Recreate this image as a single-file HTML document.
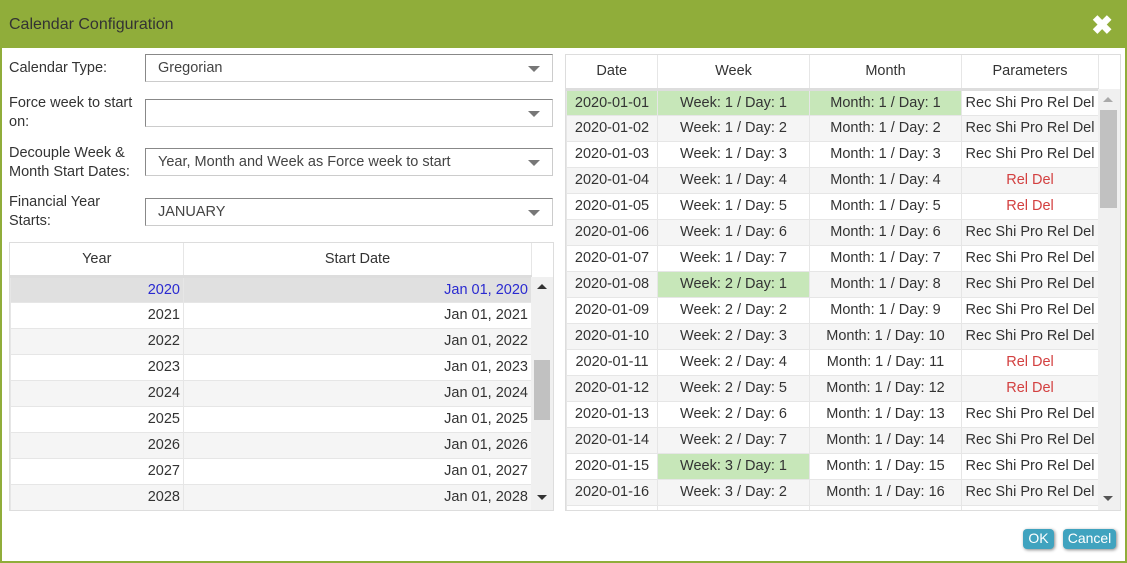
<!DOCTYPE html><html><head><style>
*{box-sizing:border-box;margin:0;padding:0}
body{width:1127px;height:563px;background:#fff;font-family:"Liberation Sans",sans-serif;font-size:14.5px;color:#333;position:relative;overflow:hidden}
.frame{position:absolute;left:0;top:0;width:1127px;height:563px;border:2px solid #90ad3a;border-top:none}
.title{position:absolute;left:0;top:0;width:1127px;height:48px;background:#90ad3a;color:#333;font-size:16px;padding:16px 0 0 9px}
.x{position:absolute;right:14px;top:10px;color:#fff;font-size:26px;font-weight:bold}
.lbl{position:absolute;left:9px;line-height:19px;color:#333}
.sel{position:absolute;left:145px;width:408px;height:28px;border:1px solid #ccc;border-left-color:#888;border-top-color:#888;padding:5px 0 0 12px;color:#444}
.sel:after{content:"";position:absolute;right:12px;top:11px;border-left:6px solid transparent;border-right:6px solid transparent;border-top:6px solid #777}
table{border-collapse:collapse;position:absolute;table-layout:fixed}
td,th{height:26px;border:1px solid #e6e6e6;font-weight:normal;white-space:nowrap;overflow:hidden;padding:0 3px}
th{height:34px;background:#fff}
.L tr:nth-child(even) td{background:#f5f5f5}
.R tr:nth-child(odd) td{background:#f5f5f5}
.g{background:#c7e7b9!important}
.r{color:#d34040}
.sb{position:absolute;background:#f0f0f0}
.btn{position:absolute;top:529px;height:20px;background:#40a3bf;color:#fff;border-radius:4px;font-size:14px;text-align:center;line-height:19px;box-shadow:1px 1px 3px #888}
</style></head><body>
<div class="title">Calendar Configuration<span class="x">✖</span></div>
<div class="frame"></div>
<div class="lbl" style="top:59px">Calendar Type:</div>
<div class="sel" style="top:54px">Gregorian</div>
<div class="lbl" style="top:94px">Force week to start<br>on:</div>
<div class="sel" style="top:99px"></div>
<div class="lbl" style="top:144px">Decouple Week &amp;<br>Month Start Dates:</div>
<div class="sel" style="top:148px">Year, Month and Week as Force week to start</div>
<div class="lbl" style="top:193px">Financial Year<br>Starts:</div>
<div class="sel" style="top:198px">JANUARY</div>

<div style="position:absolute;left:9px;top:242px;width:545px;height:269px;border:1px solid #ddd;overflow:hidden">
<table class="L" style="left:0;top:0;width:521px">
<colgroup><col style="width:173px"><col style="width:348px"></colgroup>
<tr><th style="height:33px;border-top:none;border-left:none;border-bottom:3px solid #ddd">Year</th><th style="height:33px;border-top:none;border-bottom:3px solid #ddd">Start Date</th></tr>
<tr><td style="background:#e0e0e0;color:#2a2ad0;text-align:right">2020</td><td style="background:#e0e0e0;color:#2a2ad0;text-align:right">Jan 01, 2020</td></tr>
<tr><td style="text-align:right">2021</td><td style="text-align:right">Jan 01, 2021</td></tr>
<tr><td style="text-align:right">2022</td><td style="text-align:right">Jan 01, 2022</td></tr>
<tr><td style="text-align:right">2023</td><td style="text-align:right">Jan 01, 2023</td></tr>
<tr><td style="text-align:right">2024</td><td style="text-align:right">Jan 01, 2024</td></tr>
<tr><td style="text-align:right">2025</td><td style="text-align:right">Jan 01, 2025</td></tr>
<tr><td style="text-align:right">2026</td><td style="text-align:right">Jan 01, 2026</td></tr>
<tr><td style="text-align:right">2027</td><td style="text-align:right">Jan 01, 2027</td></tr>
<tr><td style="text-align:right">2028</td><td style="text-align:right">Jan 01, 2028</td></tr>
</table>
<div class="sb" style="left:521px;top:34px;width:22px;height:235px"></div>
<div style="position:absolute;left:524px;top:117px;width:16px;height:60px;background:#c1c1c1"></div>
<div style="position:absolute;left:527px;top:41px;border-left:5px solid transparent;border-right:5px solid transparent;border-bottom:5px solid #333"></div>
<div style="position:absolute;left:527px;top:252px;border-left:5px solid transparent;border-right:5px solid transparent;border-top:5px solid #333"></div>
</div>

<div style="position:absolute;left:565px;top:54px;width:556px;height:457px;border:1px solid #ddd;overflow:hidden">
<table class="R" style="left:0;top:0;width:532px;text-align:center">
<colgroup><col style="width:91px"><col style="width:152px"><col style="width:152px"><col style="width:137px"></colgroup>
<tr><th style="border-top:none;border-left:none;border-bottom:3px solid #ddd;background:#fff">Date</th><th style="border-top:none;border-bottom:3px solid #ddd;background:#fff">Week</th><th style="border-top:none;border-bottom:3px solid #ddd;background:#fff">Month</th><th style="border-top:none;border-bottom:3px solid #ddd;background:#fff">Parameters</th></tr>
<tr><td class="g">2020-01-01</td><td class="g">Week: 1 / Day: 1</td><td class="g">Month: 1 / Day: 1</td><td style="background:#fff">Rec Shi Pro Rel Del</td></tr>
<tr><td>2020-01-02</td><td>Week: 1 / Day: 2</td><td>Month: 1 / Day: 2</td><td>Rec Shi Pro Rel Del</td></tr>
<tr><td>2020-01-03</td><td>Week: 1 / Day: 3</td><td>Month: 1 / Day: 3</td><td>Rec Shi Pro Rel Del</td></tr>
<tr><td>2020-01-04</td><td>Week: 1 / Day: 4</td><td>Month: 1 / Day: 4</td><td class="r">Rel Del</td></tr>
<tr><td>2020-01-05</td><td>Week: 1 / Day: 5</td><td>Month: 1 / Day: 5</td><td class="r">Rel Del</td></tr>
<tr><td>2020-01-06</td><td>Week: 1 / Day: 6</td><td>Month: 1 / Day: 6</td><td>Rec Shi Pro Rel Del</td></tr>
<tr><td>2020-01-07</td><td>Week: 1 / Day: 7</td><td>Month: 1 / Day: 7</td><td>Rec Shi Pro Rel Del</td></tr>
<tr><td>2020-01-08</td><td class="g">Week: 2 / Day: 1</td><td>Month: 1 / Day: 8</td><td>Rec Shi Pro Rel Del</td></tr>
<tr><td>2020-01-09</td><td>Week: 2 / Day: 2</td><td>Month: 1 / Day: 9</td><td>Rec Shi Pro Rel Del</td></tr>
<tr><td>2020-01-10</td><td>Week: 2 / Day: 3</td><td>Month: 1 / Day: 10</td><td>Rec Shi Pro Rel Del</td></tr>
<tr><td>2020-01-11</td><td>Week: 2 / Day: 4</td><td>Month: 1 / Day: 11</td><td class="r">Rel Del</td></tr>
<tr><td>2020-01-12</td><td>Week: 2 / Day: 5</td><td>Month: 1 / Day: 12</td><td class="r">Rel Del</td></tr>
<tr><td>2020-01-13</td><td>Week: 2 / Day: 6</td><td>Month: 1 / Day: 13</td><td>Rec Shi Pro Rel Del</td></tr>
<tr><td>2020-01-14</td><td>Week: 2 / Day: 7</td><td>Month: 1 / Day: 14</td><td>Rec Shi Pro Rel Del</td></tr>
<tr><td>2020-01-15</td><td class="g">Week: 3 / Day: 1</td><td>Month: 1 / Day: 15</td><td>Rec Shi Pro Rel Del</td></tr>
<tr><td>2020-01-16</td><td>Week: 3 / Day: 2</td><td>Month: 1 / Day: 16</td><td>Rec Shi Pro Rel Del</td></tr>
<tr><td>2020-01-17</td><td>Week: 3 / Day: 3</td><td>Month: 1 / Day: 17</td><td>Rec Shi Pro Rel Del</td></tr>
</table>
<div class="sb" style="left:532px;top:34px;width:22px;height:423px"></div>
<div style="position:absolute;left:534px;top:55px;width:17px;height:98px;background:#c1c1c1"></div>
<div style="position:absolute;left:537px;top:42px;border-left:5px solid transparent;border-right:5px solid transparent;border-bottom:5px solid #aaa"></div>
<div style="position:absolute;left:537px;top:441px;border-left:5px solid transparent;border-right:5px solid transparent;border-top:5px solid #555"></div>
</div>
<div class="btn" style="left:1023px;width:31px">OK</div>
<div class="btn" style="left:1063px;width:53px">Cancel</div>
</body></html>
